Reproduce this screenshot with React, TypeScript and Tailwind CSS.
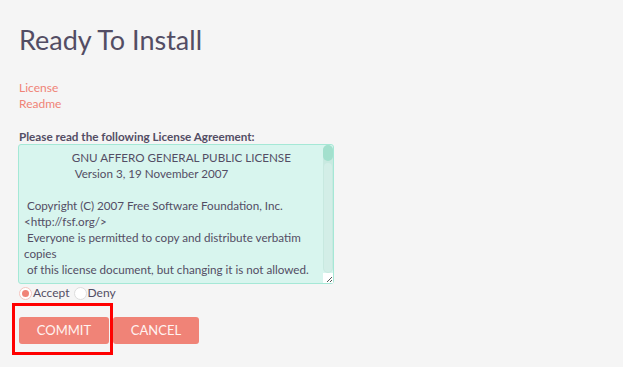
import { useState } from "react";

const LICENSE_TEXT = `                GNU AFFERO GENERAL PUBLIC LICENSE
                 Version 3, 19 November 2007

 Copyright (C) 2007 Free Software Foundation, Inc. <http://fsf.org/>
 Everyone is permitted to copy and distribute verbatim copies
 of this license document, but changing it is not allowed.

                            Preamble

  The GNU Affero General Public License is a free, copyleft license for
software and other kinds of works, specifically designed to ensure
cooperation with the community in the case of network server software.`;

export default function App() {
  const [choice, setChoice] = useState<"accept" | "deny">("accept");

  return (
    <div className="min-h-[367px] bg-[#f5f5f5] pl-[19px] pt-[22px] font-['Lato',sans-serif] text-[#534d64]">
      <h1 className="text-[27px] leading-[36px] font-normal">Ready To Install</h1>

      {/* doc links */}
      <div className="mt-[22px] flex flex-col text-[12px] leading-[16px] text-[#f08377]">
        <a href="#" className="w-fit">License</a>
        <a href="#" className="w-fit">Readme</a>
      </div>

      <label className="mt-[16px] block text-[11.7px] font-bold leading-[16px]">
        Please read the following License Agreement:
      </label>

      {/* license box with its scrollbar */}
      <div className="-ml-px flex h-[140px] w-[316px] rounded-[3px] border border-[#a5e8d6] bg-[#d8f5ee]">
        <textarea
          readOnly
          value={LICENSE_TEXT}
          className="h-full min-w-0 flex-1 resize-none overflow-hidden bg-transparent pt-[5px] pl-[5px] pr-[2px] text-[11.65px] leading-[16px] text-[#534d64] outline-none"
        />
        <div className="flex w-[10px] flex-col">
          <div className="flex flex-1 flex-col rounded-[5px] bg-[#c8e9e0]">
            <div className="h-[16px] rounded-[5px] bg-[#a3e0cd]" />
            <div className="mx-px mt-[2px] mb-px flex-1 rounded-[4px] bg-[#d3eee7]" />
          </div>
          <div className="flex h-[10px] items-end justify-end bg-white">
            <svg width="8" height="8" viewBox="0 0 8 8" className="text-[#555]">
              <path d="M7 2 L2 7 M7 5 L5 7" stroke="currentColor" strokeWidth="1" />
            </svg>
          </div>
        </div>
      </div>

      {/* accept / deny */}
      <div className="mt-px flex items-center text-[12px] leading-[16px]">
        <label className="flex cursor-pointer items-center" onClick={() => setChoice("accept")}>
          <span className="flex h-[13px] w-[13px] items-center justify-center rounded-full border border-[#f5c5bf] bg-white">
            {choice === "accept" && <span className="h-[7px] w-[7px] rounded-full bg-[#f08377]" />}
          </span>
          <span className="ml-px">Accept</span>
        </label>
        <label className="ml-[4px] flex cursor-pointer items-center" onClick={() => setChoice("deny")}>
          <span className="flex h-[13px] w-[13px] items-center justify-center rounded-full border border-[#dddddd] bg-white">
            {choice === "deny" && <span className="h-[7px] w-[7px] rounded-full bg-[#f08377]" />}
          </span>
          <span className="ml-px">Deny</span>
        </label>
      </div>

      {/* actions */}
      <div className="mt-[2px] flex items-start">
        <div className="-ml-[7px] border-[3px] border-[#ff0000] pl-[4px] pr-px pt-[11px] pb-[8px]">
          <button
            type="button"
            className="block h-[27px] w-[90px] rounded-[3px] bg-[#f08377] text-[13px] text-[#fff3f1]"
          >
            COMMIT
          </button>
        </div>
        <button
          type="button"
          className="mt-[14px] h-[27px] w-[86px] rounded-[3px] bg-[#f08377] text-[13px] text-[#fff3f1]"
        >
          CANCEL
        </button>
      </div>
    </div>
  );
}
